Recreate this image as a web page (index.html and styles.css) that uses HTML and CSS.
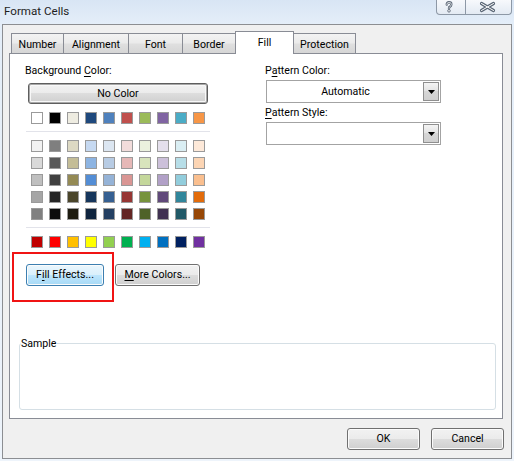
FILE: index.html
```html
<!DOCTYPE html>
<html>
<head>
<meta charset="utf-8">
<title>Format Cells</title>
<link rel="stylesheet" href="styles.css">
</head>
<body>
<div class="titlebar">
  <span class="title">Format Cells</span>
  <div class="caption">
    <div class="cap-help">
      <svg width="28" height="14" viewBox="0 0 28 14">
        <path d="M9.8 4.6 Q9.8 2.3 12 2.3 Q14.3 2.3 14.3 4.4 Q14.3 5.9 12.9 6.6 Q12 7.1 12 8.3" fill="none" stroke="#5b6776" stroke-width="2.4" stroke-linecap="round"/>
        <path d="M9.8 4.6 Q9.8 2.3 12 2.3 Q14.3 2.3 14.3 4.4 Q14.3 5.9 12.9 6.6 Q12 7.1 12 8.3" fill="none" stroke="#ffffff" stroke-width="0.7" stroke-linecap="round"/>
        <circle cx="12" cy="10.8" r="1.3" fill="#ffffff" stroke="#5b6776" stroke-width="0.9"/>
      </svg>
    </div>
    <div class="cap-close">
      <svg width="45" height="14" viewBox="0 0 45 14">
        <path d="M15.5 3.5 L27.5 10.5 M27.5 3.5 L15.5 10.5" fill="none" stroke="#5b6776" stroke-width="3.2" stroke-linecap="round"/>
        <path d="M15.5 3.5 L27.5 10.5 M27.5 3.5 L15.5 10.5" fill="none" stroke="#ffffff" stroke-width="1" stroke-linecap="round"/>
      </svg>
    </div>
  </div>
</div>

<div class="frame">
  <div class="tabs">
    <div class="tab t-number">Number</div>
    <div class="tab t-align">Alignment</div>
    <div class="tab t-font">Font</div>
    <div class="tab t-border">Border</div>
    <div class="tab t-fill active">Fill</div>
    <div class="tab t-prot">Protection</div>
  </div>

  <div class="panel">
    <div class="columns">
      <div class="left">
        <div class="label">Background <u>C</u>olor:</div>
        <div class="btn nocolor">No Color</div>

        <div class="swatches">
          <span class="sw" style="background:#ffffff"></span>
          <span class="sw" style="background:#000000"></span>
          <span class="sw" style="background:#eeece1"></span>
          <span class="sw" style="background:#1f497d"></span>
          <span class="sw" style="background:#4f81bd"></span>
          <span class="sw" style="background:#c0504d"></span>
          <span class="sw" style="background:#9bbb59"></span>
          <span class="sw" style="background:#8064a2"></span>
          <span class="sw" style="background:#4bacc6"></span>
          <span class="sw" style="background:#f79646"></span>
        </div>
        <div class="sep"></div>

        <div class="theme">
          <div class="swatches row">
            <span class="sw" style="background:#f2f2f2"></span>
            <span class="sw" style="background:#7f7f7f"></span>
            <span class="sw" style="background:#ddd9c3"></span>
            <span class="sw" style="background:#c6d9f1"></span>
            <span class="sw" style="background:#dce6f1"></span>
            <span class="sw" style="background:#f2dcdb"></span>
            <span class="sw" style="background:#ebf1de"></span>
            <span class="sw" style="background:#e4dfec"></span>
            <span class="sw" style="background:#daeef3"></span>
            <span class="sw" style="background:#fde9d9"></span>
          </div>
          <div class="swatches row">
            <span class="sw" style="background:#d9d9d9"></span>
            <span class="sw" style="background:#595959"></span>
            <span class="sw" style="background:#c4bd97"></span>
            <span class="sw" style="background:#8db4e2"></span>
            <span class="sw" style="background:#b8cce4"></span>
            <span class="sw" style="background:#e6b8b7"></span>
            <span class="sw" style="background:#d8e4bc"></span>
            <span class="sw" style="background:#ccc0da"></span>
            <span class="sw" style="background:#b7dee8"></span>
            <span class="sw" style="background:#fcd5b4"></span>
          </div>
          <div class="swatches row">
            <span class="sw" style="background:#bfbfbf"></span>
            <span class="sw" style="background:#404040"></span>
            <span class="sw" style="background:#948a54"></span>
            <span class="sw" style="background:#538dd5"></span>
            <span class="sw" style="background:#95b3d7"></span>
            <span class="sw" style="background:#da9694"></span>
            <span class="sw" style="background:#c4d79b"></span>
            <span class="sw" style="background:#b1a0c7"></span>
            <span class="sw" style="background:#92cddc"></span>
            <span class="sw" style="background:#fabf8f"></span>
          </div>
          <div class="swatches row">
            <span class="sw" style="background:#a6a6a6"></span>
            <span class="sw" style="background:#262626"></span>
            <span class="sw" style="background:#4a452a"></span>
            <span class="sw" style="background:#16365c"></span>
            <span class="sw" style="background:#366092"></span>
            <span class="sw" style="background:#963634"></span>
            <span class="sw" style="background:#76933c"></span>
            <span class="sw" style="background:#60497a"></span>
            <span class="sw" style="background:#31869b"></span>
            <span class="sw" style="background:#e26b0a"></span>
          </div>
          <div class="swatches row">
            <span class="sw" style="background:#808080"></span>
            <span class="sw" style="background:#0d0d0d"></span>
            <span class="sw" style="background:#1d1b10"></span>
            <span class="sw" style="background:#0f243e"></span>
            <span class="sw" style="background:#244062"></span>
            <span class="sw" style="background:#632523"></span>
            <span class="sw" style="background:#4f6228"></span>
            <span class="sw" style="background:#403151"></span>
            <span class="sw" style="background:#215967"></span>
            <span class="sw" style="background:#974706"></span>
          </div>
        </div>
        <div class="sep"></div>

        <div class="swatches">
          <span class="sw" style="background:#c00000"></span>
          <span class="sw" style="background:#ff0000"></span>
          <span class="sw" style="background:#ffc000"></span>
          <span class="sw" style="background:#ffff00"></span>
          <span class="sw" style="background:#92d050"></span>
          <span class="sw" style="background:#00b050"></span>
          <span class="sw" style="background:#00b0f0"></span>
          <span class="sw" style="background:#0070c0"></span>
          <span class="sw" style="background:#002060"></span>
          <span class="sw" style="background:#7030a0"></span>
        </div>

        <div class="actions">
          <div class="btn hover fill-effects">F<u>i</u>ll Effects...</div>
          <div class="btn more-colors"><u>M</u>ore Colors...</div>
        </div>
      </div>

      <div class="right">
        <div class="label">P<u>a</u>ttern Color:</div>
        <div class="combo">
          <div class="combo-text">Automatic</div>
          <div class="dd"><svg width="7" height="4" viewBox="0 0 7 4"><polygon points="0,0 7,0 3.5,4" fill="#000"/></svg></div>
        </div>
        <div class="label label2"><u>P</u>attern Style:</div>
        <div class="combo">
          <div class="combo-text"></div>
          <div class="dd"><svg width="7" height="4" viewBox="0 0 7 4"><polygon points="0,0 7,0 3.5,4" fill="#000"/></svg></div>
        </div>
      </div>
    </div>

    <div class="sample">
      <span class="sample-label">Sample</span>
    </div>

    <div class="highlight"></div>
  </div>

  <div class="footer">
    <div class="btn dlg">OK</div>
    <div class="btn dlg">Cancel</div>
  </div>
</div>
</body>
</html>
```

FILE: styles.css
```css
* {
  box-sizing: border-box;
}

html, body {
  margin: 0;
  padding: 0;
}

body {
  width: 514px;
  height: 461px;
  overflow: hidden;
  background: linear-gradient(to bottom, #d8e5f4 0px, #e4eef9 24px, #eef4fb 100%);
  font-family: Roboto, "Liberation Sans", sans-serif;
  font-size: 10.6px;
  line-height: 15px;
  color: #000;
}

u {
  text-decoration-thickness: 1px;
  text-underline-offset: 2px;
}

/* ---------- title bar ---------- */
.titlebar {
  height: 24px;
  display: flex;
  justify-content: space-between;
  align-items: flex-start;
}

.title {
  padding: 4px 0 0 4px;
  font-size: 11.6px;
  color: #1e1e1e;
}

.caption {
  display: flex;
  height: 15px;
  margin-right: 2px;
  border: 1px solid #8d98a6;
  border-top: none;
  border-radius: 0 0 4px 4px;
  background: linear-gradient(to bottom, #f7f9fc, #e3eaf3);
  overflow: hidden;
}

.cap-help {
  width: 29px;
  border-right: 1px solid #8d98a6;
  display: flex;
}

.cap-close {
  width: 45px;
  display: flex;
}

/* ---------- dialog frame ---------- */
.frame {
  margin-left: 2px;
  width: 510px;
  height: 435px;
  border: 1px solid #8c8e92;
  background: #f0f0f0;
  display: flex;
  flex-direction: column;
}

.tabs {
  display: flex;
  align-items: flex-end;
  height: 22px;
  margin: 6px 0 0 8px;
  position: relative;
  z-index: 1;
}

.tab {
  height: 20px;
  margin-left: -1px;
  padding-top: 3px;
  border: 1px solid #898c95;
  border-bottom: none;
  background: linear-gradient(to bottom, #f3f3f3 0%, #ebebeb 45%, #dfdfdf 55%, #d6d6d6 100%);
  text-align: center;
  white-space: nowrap;
}

.t-number { width: 53px; margin-left: 0; }
.t-align { width: 66px; }
.t-font { width: 55px; }
.t-border { width: 54px; }
.t-fill { width: 59px; }
.t-prot { width: 63px; }

.tab.active {
  height: 23px;
  margin-bottom: -1px;
  padding-top: 3px;
  background: #ffffff;
}

.panel {
  position: relative;
  margin-left: 6px;
  width: 494px;
  height: 366px;
  border: 1px solid #898c95;
  background: #ffffff;
  display: flex;
  flex-direction: column;
}

.columns {
  display: flex;
  padding: 9px 0 0 15px;
}

.left {
  width: 186px;
  display: flex;
  flex-direction: column;
}

.right {
  width: 176px;
  margin-left: 54px;
  display: flex;
  flex-direction: column;
}

.label {
  height: 15px;
  padding-top: 1px;
  line-height: 14px;
  white-space: nowrap;
}

.label2 {
  margin-top: 2px;
}

/* ---------- buttons ---------- */
.btn {
  border: 1px solid #707070;
  border-radius: 3px;
  background: linear-gradient(to bottom, #f2f2f2 0%, #ebebeb 50%, #dddddd 50%, #cfcfcf 100%);
  box-shadow: inset 0 0 0 1px #fbfbfb;
  text-align: center;
  white-space: nowrap;
}

.btn.hover {
  border-color: #3c7fb1;
  background: linear-gradient(to bottom, #eaf6fd 0%, #d9f0fc 50%, #bee6fd 50%, #a7d9f5 100%);
}

.nocolor {
  margin: 5px 0 0 3px;
  width: 180px;
  height: 21px;
  line-height: 19px;
  border-color: #5e5e5e;
  box-shadow: inset 0 0 0 1px #a8a8a8, inset 0 0 0 2px #f8f8f8;
}

.actions {
  display: flex;
  gap: 11px;
  margin: 16px 0 0 1px;
}

.fill-effects {
  width: 78px;
  height: 22px;
  line-height: 20px;
}

.more-colors {
  width: 85px;
  height: 22px;
  line-height: 20px;
}

/* ---------- swatches ---------- */
.swatches {
  display: flex;
  gap: 6px;
  margin: 8px 0 0 6px;
}

.theme {
  display: flex;
  flex-direction: column;
  gap: 5px;
  margin-top: 8px;
}

.swatches.row {
  margin-top: 0;
}

.sw {
  width: 12px;
  height: 12px;
  border: 1px solid #9a9a9a;
}

.sep {
  width: 184px;
  height: 1px;
  margin: 7px 0 0 1px;
  background: #e2e3ea;
}

/* ---------- combo boxes ---------- */
.combo {
  display: flex;
  width: 175px;
  height: 23px;
  margin: 2px 0 0 1px;
  padding: 1px;
  border: 1px solid #a3a3a3;
  background: #ffffff;
}

.combo-text {
  flex: 1;
  text-align: center;
  line-height: 19px;
}

.dd {
  width: 16px;
  height: 19px;
  border: 1px solid #8f8f8f;
  background: linear-gradient(to bottom, #f4f4f4, #e2e2e2 50%, #d6d6d6 50%, #cfcfcf);
  display: flex;
  align-items: center;
  justify-content: center;
}

/* ---------- sample group ---------- */
.sample {
  position: relative;
  margin: auto 0 8px 9px;
  width: 477px;
  height: 67px;
  border: 1px solid #d5dfe5;
  border-radius: 3px;
}

.sample-label {
  position: absolute;
  left: 1px;
  top: -8px;
  background: #ffffff;
  line-height: 15px;
}

/* annotation box around "Fill Effects" */
.highlight {
  position: absolute;
  left: 2px;
  top: 198px;
  width: 102px;
  height: 50px;
  border: 2px solid #f01414;
}

/* ---------- footer ---------- */
.footer {
  display: flex;
  justify-content: flex-end;
  gap: 11px;
  margin-top: 9px;
  padding-right: 7px;
}

.dlg {
  width: 73px;
  height: 22px;
  line-height: 20px;
}
```
